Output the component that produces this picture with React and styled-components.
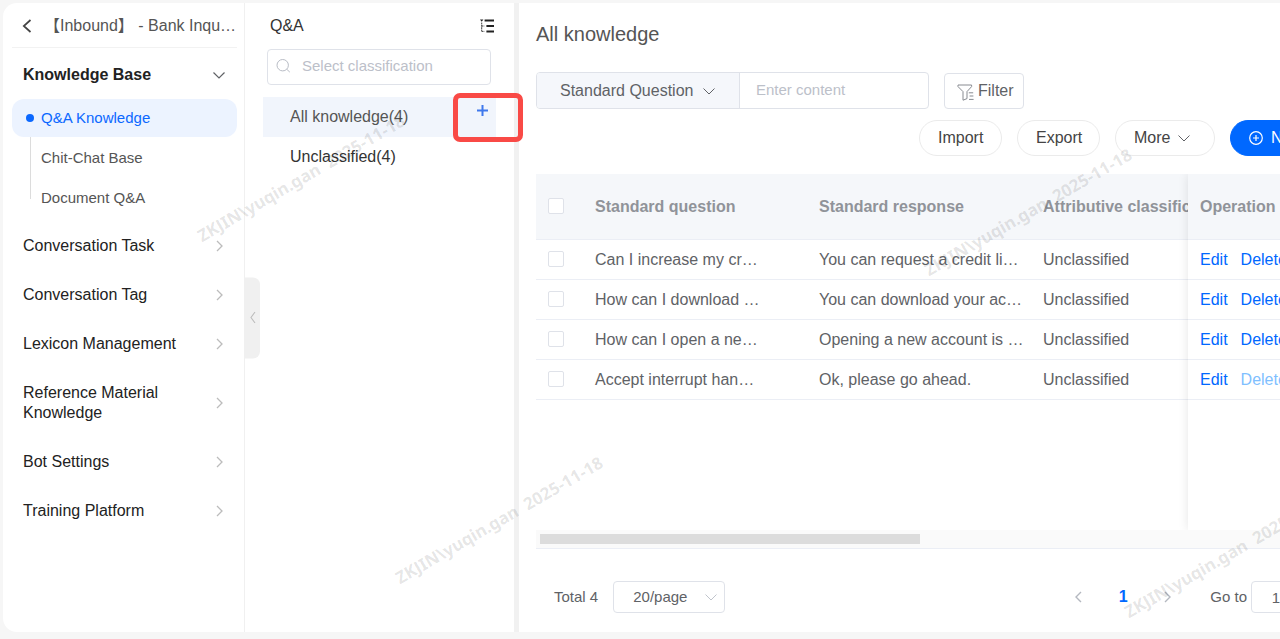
import React from "react";
import styled, { createGlobalStyle } from "styled-components";

const GlobalStyle = createGlobalStyle`
  *, *::before, *::after { box-sizing: border-box; }
  body {
    margin: 0;
    background: #f6f6f6;
    color: #606266;
    font: 16px/20px "Liberation Sans", "Noto Sans CJK SC", sans-serif;
  }
  button, input, select { font: inherit; color: inherit; margin: 0; }
  button { cursor: pointer; }
`;

/* ---------- icons ---------- */

const chevronPaths = {
  down: "M.5 3.5L6 9l5.5-5.5",
  right: "M4 1l5 5-5 5",
  left: "M8 1L3 6l5 5",
};

const Chevron = ({ dir, size = 12, color = "#606266", weight = 1 }) => (
  <svg width={size} height={size} viewBox="0 0 12 12" fill="none" aria-hidden="true">
    <path d={chevronPaths[dir]} stroke={color} strokeWidth={weight} />
  </svg>
);

const BackIcon = () => (
  <svg width="10" height="14" viewBox="0 0 10 14" fill="none" aria-hidden="true">
    <path d="M8.5 1L1.8 7l6.7 6" stroke="#444" strokeWidth="1.7" />
  </svg>
);

const SlimLeftIcon = () => (
  <svg width="6" height="12" viewBox="0 0 6 12" fill="none" aria-hidden="true">
    <path d="M5 .5L1 6l4 5.5" stroke="#bcbcbc" strokeWidth="1.1" />
  </svg>
);

const TreeIcon = () => (
  <svg width="14" height="14" viewBox="0 0 14 14" fill="none" aria-hidden="true">
    <path d="M4.6 1.6h9.4M6.4 7h7.6M6.4 12.4h7.6" stroke="#222" strokeWidth="2" />
    <path d="M0 .4h3.4L1.7 2.8z" fill="#222" />
    <path d="M1.7 3.6v9.2M1.7 7h2.6M1.7 12.4h2.6" stroke="#444" strokeDasharray="1.8 .5" />
  </svg>
);

const SearchIcon = () => (
  <svg width="15" height="15" viewBox="0 0 15 15" fill="none" aria-hidden="true">
    <circle cx="6.7" cy="6.2" r="5.7" stroke="#b8bcc5" />
    <path d="M10.8 10.3l3 2.8" stroke="#b8bcc5" />
  </svg>
);

const FilterIcon = () => (
  <svg width="17" height="17" viewBox="0 0 17 17" fill="none" aria-hidden="true">
    <path
      d="M1 1h13.6v1.6L10 7.6v7L6 16.2V7.6L1 2.6z"
      stroke="#888b91"
      strokeLinejoin="round"
    />
    <path d="M11.8 8.8h4.4M12.6 12h3.8M12 15.4h4.6" stroke="#888b91" />
  </svg>
);

const PlusIcon = () => (
  <svg width="11" height="11" viewBox="0 0 11 11" fill="none" aria-hidden="true">
    <path d="M5.5 0v11M0 5.5h11" stroke="#3f78ec" strokeWidth="2" />
  </svg>
);

const PlusCircleIcon = () => (
  <svg width="14" height="14" viewBox="0 0 14 14" fill="none" aria-hidden="true">
    <circle cx="7" cy="7" r="6.3" stroke="#fff" strokeWidth="1.2" />
    <path d="M7 4v6M4 7h6" stroke="#fff" strokeWidth="1.2" />
  </svg>
);

/* ---------- page frame ---------- */

const Page = styled.div`
  position: relative;
  min-height: 100vh;
  padding: 3px 0 7px 3px;
  display: flex;
  overflow: hidden;
`;

const Shell = styled.div`
  flex: 1;
  min-width: 0;
  display: flex;
  background: #fff;
  border-radius: 14px 0 0 14px;
`;

/* ---------- sidebar ---------- */

const Sidebar = styled.nav`
  flex: none;
  width: 242px;
  padding: 0 7px 0 9px;
  border-right: 1px solid #f0f0f0;
`;

const BotHeader = styled.div`
  display: flex;
  align-items: center;
  gap: 12px;
  height: 45px;
  padding: 1px 0 0 10px;
  border-bottom: 1px solid #f2f2f2;
  color: #555;
  white-space: nowrap;
`;

const IconButton = styled.button`
  display: flex;
  align-items: center;
  justify-content: center;
  padding: 0;
  border: 0;
  background: none;
`;

const MenuButton = styled.button`
  display: flex;
  align-items: center;
  justify-content: space-between;
  width: 100%;
  padding: ${(p) => (p.$open ? "17px 12px 14px 11px" : "15px 12px 14px 11px")};
  border: 0;
  background: none;
  text-align: left;
  color: #222;
  font-weight: ${(p) => (p.$open ? 700 : 400)};

  span { max-width: 160px; }
`;

const SubMenu = styled.ul`
  position: relative;
  display: flex;
  flex-direction: column;
  gap: 2px;
  margin: 0 0 4px;
  padding: 0;
  list-style: none;

  &::before {
    content: "";
    position: absolute;
    left: 18px;
    top: 20px;
    bottom: 18px;
    width: 1px;
    background: #dcdcdc;
  }
`;

const SubLink = styled.a`
  position: relative;
  display: block;
  padding: 9px 29px;
  border-radius: 12px;
  font-size: 15px;
  text-decoration: none;
  color: ${(p) => (p.$active ? "#0b68ff" : "#555")};
  background: ${(p) => (p.$active ? "#ecf3ff" : "transparent")};

  &::before {
    content: "";
    display: ${(p) => (p.$active ? "block" : "none")};
    position: absolute;
    left: 14px;
    top: 15px;
    width: 8px;
    height: 8px;
    border-radius: 50%;
    background: #0b68ff;
  }
`;

/* ---------- classification panel ---------- */

const ClassPanel = styled.section`
  position: relative;
  flex: none;
  width: 274px;
  padding: 0 18px;
  border-right: 5px solid #f1f1f1;
`;

const PanelHeader = styled.div`
  display: flex;
  align-items: center;
  justify-content: space-between;
  height: 46px;
  padding: 0 2px 0 7px;
  color: #333;
`;

const SearchBox = styled.label`
  display: flex;
  align-items: center;
  gap: 11px;
  height: 36px;
  margin: 0 5px 12px 4px;
  padding: 0 8px 2px;
  border: 1px solid #dfe2e9;
  border-radius: 4px;
`;

const PlainInput = styled.input`
  flex: 1;
  min-width: 0;
  padding: 0;
  border: 0;
  outline: 0;
  background: none;
  font-size: 15px;
  &::placeholder { color: #bcc0c9; opacity: 1; }
`;

const TreeRow = styled.div`
  display: flex;
  justify-content: space-between;
  height: 40px;
  padding: 0 8px 0 27px;
  line-height: 39px;
  color: ${(p) => (p.$active ? "#555" : "#333")};
  background: ${(p) => (p.$active ? "#f1f5fc" : "transparent")};

  ${IconButton} { height: 26px; }
`;

const Collapse = styled(IconButton)`
  position: absolute;
  left: 0;
  top: 50%;
  width: 15px;
  height: 81px;
  transform: translateY(-50%);
  border-radius: 0 7px 7px 0;
  background: #f0f0f0;
`;

/* ---------- main area ---------- */

const Main = styled.main`
  flex: 1;
  min-width: 0;
  padding-left: 17px;
  display: flex;
  overflow: hidden;
`;

const Content = styled.div`
  flex: 1;
  min-width: 824px;
  display: flex;
  flex-direction: column;
`;

const Title = styled.h1`
  margin: 19px 0 26px;
  font-size: 20px;
  line-height: 24px;
  font-weight: 400;
  color: #555;
`;

const FilterRow = styled.div`
  display: flex;
  align-items: flex-end;
  gap: 15px;
`;

const SearchGroup = styled.div`
  display: flex;
  width: 393px;
  height: 37px;
  border: 1px solid #dfe2e9;
  border-radius: 4px;
  overflow: hidden;

  ${PlainInput} { padding: 0 16px 1px; }
`;

const SelectWrap = styled.div`
  display: grid;
  align-items: center;
  width: ${(p) => p.$width}px;

  > * { grid-area: 1 / 1; }
  > svg {
    justify-self: end;
    margin-right: ${(p) => p.$inset}px;
    pointer-events: none;
  }
`;

const Select = styled.select`
  appearance: none;
  width: 100%;
  height: 100%;
  padding: 0 23px;
  border: 0 solid #dfe2e9;
  border-right-width: 1px;
  background: #f5f7fb;
  outline: 0;
`;

const PageSelect = styled(Select)`
  height: 32px;
  padding: 0 19px;
  border-width: 1px;
  border-radius: 4px;
  background: #fff;
  font-size: 15px;
`;

const FilterButton = styled.button`
  display: flex;
  align-items: center;
  gap: 4px;
  height: 36px;
  padding: 0 9px 0 12px;
  border: 1px solid #dfe2e9;
  border-radius: 4px;
  background: #fff;

  svg { margin-top: 2px; }
`;

const Actions = styled.div`
  display: flex;
  justify-content: flex-end;
  gap: 15px;
  margin: 11px 0 18px;
`;

const PillButton = styled.button`
  display: flex;
  align-items: center;
  gap: 8px;
  width: ${(p) => p.$width || 83}px;
  height: 36px;
  padding: 0 18px;
  border: 1px solid ${(p) => (p.$primary ? "#0068ff" : "#ebebeb")};
  border-radius: 18px;
  background: ${(p) => (p.$primary ? "#0068ff" : "#fff")};
  color: ${(p) => (p.$primary ? "#fff" : "#444")};
`;

const TableArea = styled.div`
  flex: 1;
  display: flex;
`;

const ScrollPane = styled.div`
  flex: 1;
  min-width: 0;
  overflow: hidden;
`;

const FixedPane = styled.div`
  position: relative;
  flex: none;
  width: 172px;
  background: #fff;
  box-shadow: 0 0 10px rgba(0, 0, 0, 0.1);
  clip-path: inset(0 0 0 -12px);
`;

const Table = styled.table`
  width: 100%;
  table-layout: fixed;
  border-collapse: separate;
  border-spacing: 0;
  white-space: nowrap;

  th, td {
    padding: 0 12px;
    text-align: left;
    border-bottom: 1px solid #ebeef5;
  }
  th {
    height: 66px;
    overflow: hidden;
    background: #f5f7fa;
    color: #909399;
  }
  td { height: 40px; }
`;

const Col = styled.col`
  width: ${(p) => p.$width}px;
`;

const Checkbox = styled.input.attrs({ type: "checkbox" })`
  appearance: none;
  display: block;
  width: 16px;
  height: 16px;
  border: 1px solid #dfe2e9;
  border-radius: 2px;
  background: #fff;

  th &, td & { margin-bottom: 2px; }
`;

const RowLink = styled.a`
  margin-right: 13px;
  text-decoration: none;
  color: ${(p) => (p.$muted ? "#80bfff" : "#0068ff")};
`;

const ScrollTrack = styled.div`
  height: 19px;
  padding: 4px;
  background: #fafafa;
  border-bottom: 1px solid #ebeef5;
`;

const ScrollThumb = styled.div`
  width: 380px;
  height: 10px;
  background: #dcdcdc;
`;

const Pagination = styled.div`
  display: flex;
  align-items: center;
  padding: 32px 59px 19px 18px;
  font-size: 15px;

  ${SelectWrap} { margin-left: 15px; }
`;

const Pager = styled.div`
  display: flex;
  gap: 12px;
  margin: 0 27px 0 auto;

  ${IconButton} {
    width: 32px;
    height: 32px;
    color: #0068ff;
    font-size: 16px;
    font-weight: 700;
  }
`;

const GoTo = styled.label`
  display: flex;
  align-items: center;
  gap: 4px;
`;

const PageInput = styled.input`
  width: 50px;
  height: 32px;
  padding: 0;
  border: 1px solid #dfe2e9;
  border-radius: 4px;
  text-align: center;
`;

/* ---------- overlays ---------- */

const Highlight = styled.div`
  position: absolute;
  left: 453px;
  top: 93px;
  width: 70px;
  height: 49px;
  border: 5px solid #f94a46;
  border-radius: 7px;
  pointer-events: none;
`;

const Watermark = styled.div`
  position: absolute;
  left: ${(p) => p.$x}px;
  top: ${(p) => p.$y}px;
  transform: rotate(-30deg);
  transform-origin: 0 100%;
  font: 700 17px/20px "Noto Sans", sans-serif;
  white-space: pre;
  color: rgba(0, 0, 0, 0.11);
  pointer-events: none;
`;

/* ---------- data ---------- */

const menu = [
  "Conversation Task",
  "Conversation Tag",
  "Lexicon Management",
  "Reference Material Knowledge",
  "Bot Settings",
  "Training Platform",
];

const rows = [
  ["Can I increase my cr…", "You can request a credit li…"],
  ["How can I download …", "You can download your ac…"],
  ["How can I open a ne…", "Opening a new account is …"],
  ["Accept interrupt han…", "Ok, please go ahead."],
];

const watermarks = [
  [204, 226],
  [402, 568],
  [931, 260],
  [1131, 602],
];

export default function App() {
  return (
    <>
      <GlobalStyle />
      <Page>
        <Shell>
          <Sidebar>
            <BotHeader>
              <IconButton aria-label="Back"><BackIcon /></IconButton>
              <span>【Inbound】 - Bank Inqu…</span>
            </BotHeader>
            <MenuButton $open>
              <span>Knowledge Base</span>
              <Chevron dir="down" weight={1.2} />
            </MenuButton>
            <SubMenu>
              <li><SubLink href="#qa" $active>Q&amp;A Knowledge</SubLink></li>
              <li><SubLink href="#chat">Chit-Chat Base</SubLink></li>
              <li><SubLink href="#doc">Document Q&amp;A</SubLink></li>
            </SubMenu>
            {menu.map((name) => (
              <MenuButton key={name}>
                <span>{name}</span>
                <Chevron dir="right" color="#bcbcbc" weight={1.3} />
              </MenuButton>
            ))}
          </Sidebar>

          <ClassPanel>
            <PanelHeader>
              <span>Q&amp;A</span>
              <IconButton aria-label="Expand tree"><TreeIcon /></IconButton>
            </PanelHeader>
            <SearchBox>
              <SearchIcon />
              <PlainInput placeholder="Select classification" aria-label="Select classification" />
            </SearchBox>
            <TreeRow $active>
              <span>All knowledge(4)</span>
              <IconButton aria-label="Add classification"><PlusIcon /></IconButton>
            </TreeRow>
            <TreeRow>
              <span>Unclassified(4)</span>
            </TreeRow>
            <Collapse aria-label="Collapse panel"><SlimLeftIcon /></Collapse>
          </ClassPanel>

          <Main>
            <Content>
              <Title>All knowledge</Title>
              <FilterRow>
                <SearchGroup>
                  <SelectWrap $width={203} $inset={25}>
                    <Select aria-label="Search field">
                      <option>Standard Question</option>
                    </Select>
                    <Chevron dir="down" />
                  </SelectWrap>
                  <PlainInput placeholder="Enter content" aria-label="Enter content" />
                </SearchGroup>
                <FilterButton><FilterIcon />Filter</FilterButton>
              </FilterRow>
              <Actions>
                <PillButton>Import</PillButton>
                <PillButton>Export</PillButton>
                <PillButton $width={100}>More<Chevron dir="down" /></PillButton>
                <PillButton $primary $width={130}><PlusCircleIcon />New</PillButton>
              </Actions>

              <TableArea>
                <ScrollPane>
                  <Table>
                    <colgroup>
                      <Col $width={47} />
                      <Col $width={224} />
                      <Col $width={224} />
                      <col />
                    </colgroup>
                    <thead>
                      <tr>
                        <th><Checkbox aria-label="Select all" /></th>
                        <th>Standard question</th>
                        <th>Standard response</th>
                        <th>Attributive classification</th>
                      </tr>
                    </thead>
                    <tbody>
                      {rows.map(([question, response]) => (
                        <tr key={question}>
                          <td><Checkbox aria-label={question} /></td>
                          <td>{question}</td>
                          <td>{response}</td>
                          <td>Unclassified</td>
                        </tr>
                      ))}
                    </tbody>
                  </Table>
                </ScrollPane>
                <FixedPane>
                  <Table>
                    <thead>
                      <tr><th>Operation</th></tr>
                    </thead>
                    <tbody>
                      {rows.map(([question], i) => (
                        <tr key={question}>
                          <td>
                            <RowLink href="#edit">Edit</RowLink>
                            <RowLink href="#delete" $muted={i === 3}>Delete</RowLink>
                          </td>
                        </tr>
                      ))}
                    </tbody>
                  </Table>
                </FixedPane>
              </TableArea>
              <ScrollTrack><ScrollThumb /></ScrollTrack>

              <Pagination>
                <span>Total 4</span>
                <SelectWrap $width={112} $inset={8}>
                  <PageSelect aria-label="Page size">
                    <option>20/page</option>
                  </PageSelect>
                  <Chevron dir="down" color="#c0c4cc" />
                </SelectWrap>
                <Pager>
                  <IconButton aria-label="Previous page">
                    <Chevron dir="left" color="#b4b8c0" weight={1.4} />
                  </IconButton>
                  <IconButton>1</IconButton>
                  <IconButton aria-label="Next page">
                    <Chevron dir="right" color="#b4b8c0" weight={1.4} />
                  </IconButton>
                </Pager>
                <GoTo>
                  Go to
                  <PageInput defaultValue="1" />
                </GoTo>
              </Pagination>
            </Content>
          </Main>
        </Shell>

        <Highlight />
        {watermarks.map(([x, y]) => (
          <Watermark key={x} $x={x} $y={y} aria-hidden="true">
            {"ZKJIN\\yuqin.gan  2025-11-18"}
          </Watermark>
        ))}
      </Page>
    </>
  );
}
